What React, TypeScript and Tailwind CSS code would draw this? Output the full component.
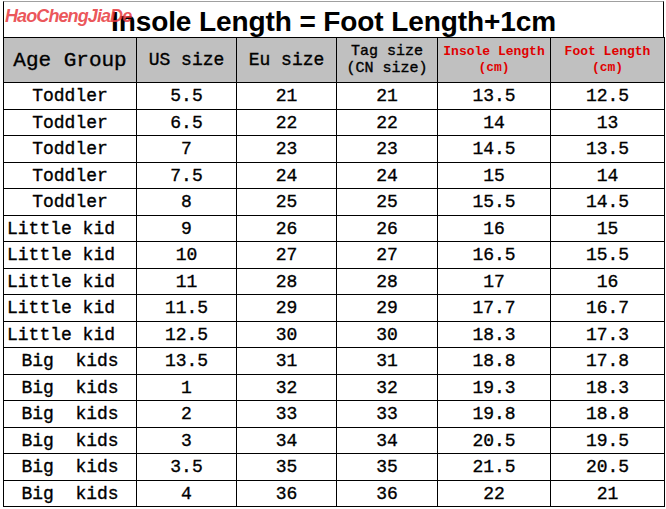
const rows: [string, string, string, string, string, string][] = [
  ['Toddler', '5.5', '21', '21', '13.5', '12.5'],
  ['Toddler', '6.5', '22', '22', '14', '13'],
  ['Toddler', '7', '23', '23', '14.5', '13.5'],
  ['Toddler', '7.5', '24', '24', '15', '14'],
  ['Toddler', '8', '25', '25', '15.5', '14.5'],
  ['Little kid', '9', '26', '26', '16', '15'],
  ['Little kid', '10', '27', '27', '16.5', '15.5'],
  ['Little kid', '11', '28', '28', '17', '16'],
  ['Little kid', '11.5', '29', '29', '17.7', '16.7'],
  ['Little kid', '12.5', '30', '30', '18.3', '17.3'],
  ['Big  kids', '13.5', '31', '31', '18.8', '17.8'],
  ['Big  kids', '1', '32', '32', '19.3', '18.3'],
  ['Big  kids', '2', '33', '33', '19.8', '18.8'],
  ['Big  kids', '3', '34', '34', '20.5', '19.5'],
  ['Big  kids', '3.5', '35', '35', '21.5', '20.5'],
  ['Big  kids', '4', '36', '36', '22', '21'],
];

const mono = { fontFamily: '"Liberation Mono", "DejaVu Sans Mono", monospace' };

export default function App() {
  return (
    <div className="relative w-[666px] h-[509px] bg-white overflow-hidden">
      {/* watermark */}
      <div className="absolute left-[5px] top-[3px] z-10 text-[18px] font-bold italic tracking-[-0.9px] text-[#e8383d]/85 font-['Liberation_Sans',Arial,sans-serif]">
        HaoChengJiaDe
      </div>

      <div className="pl-[3px] pt-[1px]">
        {/* title row */}
        <div className="w-[661px] h-[36px] border-t border-[#a0a0a0] border-l border-r border-l-black border-r-black flex items-center justify-center">
          <span className="text-[28px] font-bold leading-none text-black font-['Liberation_Sans',Arial,sans-serif] tracking-[-0.1px] mt-[5px]">
            Insole Length = Foot Length+1cm
          </span>
        </div>

        <table className="table-fixed border-collapse w-[661px] text-black [-webkit-text-stroke:0.35px_black]" style={mono}>
          <colgroup>
            <col className="w-[133px]" />
            <col className="w-[100px]" />
            <col className="w-[100px]" />
            <col className="w-[101px]" />
            <col className="w-[113px]" />
            <col className="w-[114px]" />
          </colgroup>
          <thead>
            <tr className="h-[45px] bg-[#c0c0c0]">
              <th className="border border-black font-normal text-[21px] leading-none whitespace-pre p-0">Age Group</th>
              <th className="border border-black font-normal text-[18px] leading-none p-0">US size</th>
              <th className="border border-black font-normal text-[18px] leading-none p-0">Eu size</th>
              <th className="border border-black font-normal text-[15px] leading-[17px] p-0">
                Tag size
                <br />
                (CN size)
              </th>
              <th className="border border-black font-bold text-[13px] leading-[16px] text-[#e00000] [-webkit-text-stroke:0px] p-0">
                Insole Length
                <br />
                (cm)
              </th>
              <th className="border border-black font-bold text-[13px] leading-[16px] text-[#e00000] [-webkit-text-stroke:0px] p-0">
                Foot Length
                <br />
                (cm)
              </th>
            </tr>
          </thead>
          <tbody>
            {rows.map((r, i) => (
              <tr key={i} className={i % 2 === 0 ? 'h-[27px]' : 'h-[26px]'}>
                {r.map((c, j) => (
                  <td
                    key={j}
                    className={
                      'border border-black p-0 text-[18px] leading-none whitespace-pre ' +
                      (j === 0 && c.startsWith('Little') ? 'text-left pl-[3px]' : 'text-center')
                    }
                  >
                    {c}
                  </td>
                ))}
              </tr>
            ))}
          </tbody>
        </table>
      </div>
    </div>
  );
}
